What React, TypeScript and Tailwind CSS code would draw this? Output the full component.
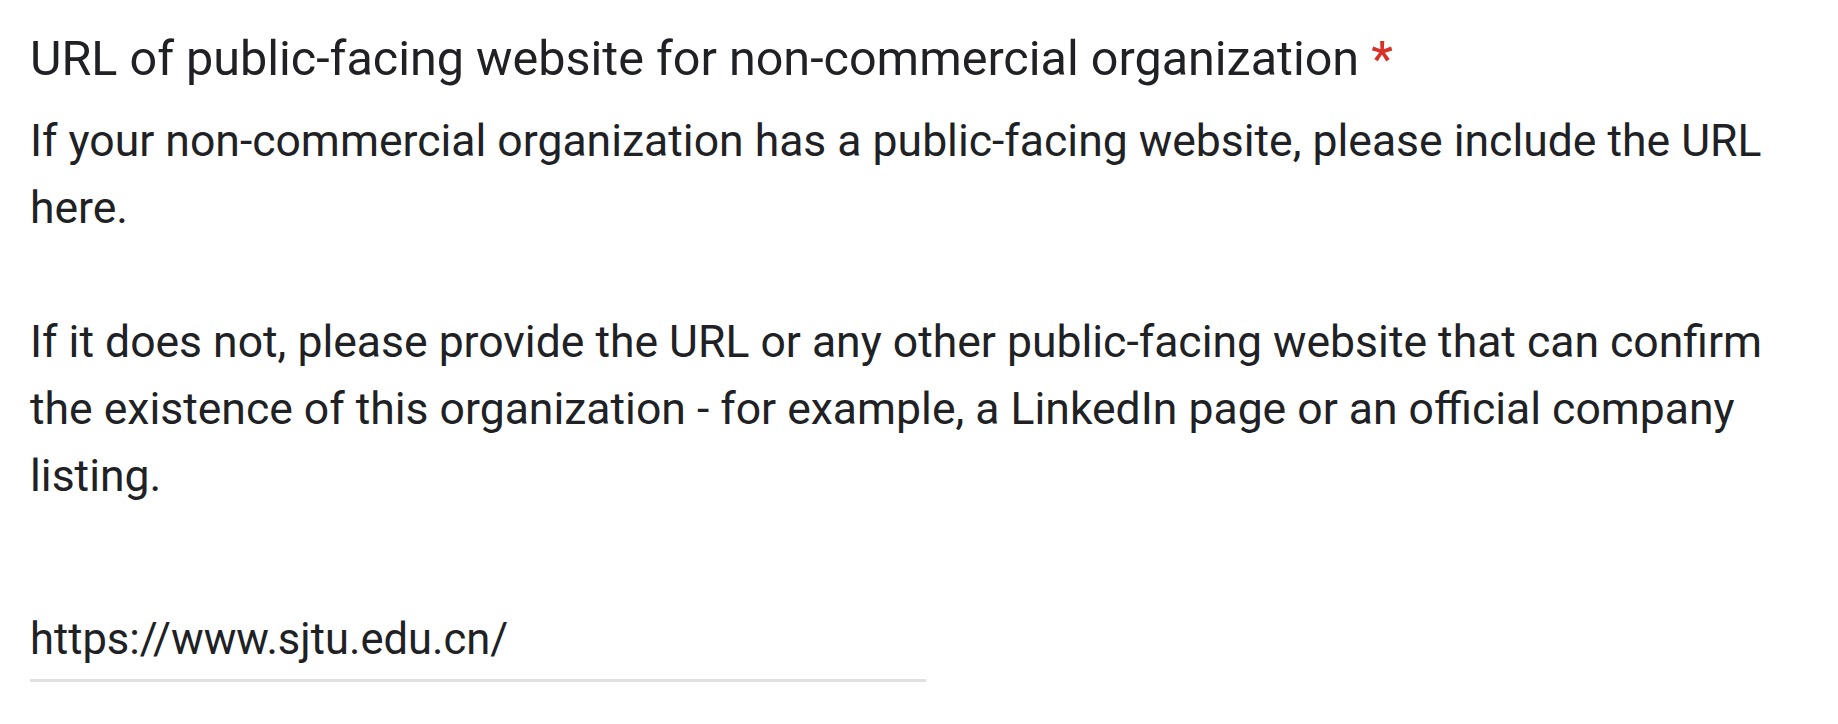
export default function App() {
  return (
    <div className="min-h-screen bg-white font-['Roboto',sans-serif] text-[#202124]">
      <div className="pl-[30px] pr-[30px] pt-[26px]">
        {/* Question title */}
        <div className="text-[48.5px] leading-[66px]">
          URL of public-facing website for non-commercial organization
          <span className="text-[#d93025] font-medium"> *</span>
        </div>

        {/* Help text */}
        <div className="text-[44.5px] leading-[67px] whitespace-pre-line mt-[16px]">
          {'If your non-commercial organization has a public-facing website, please include the URL here.\n\nIf it does not, please provide the URL or any other public-facing website that can confirm the existence of this organization - for example, a LinkedIn page or an official company listing.'}
        </div>

        {/* Answer */}
        <div className="mt-[100px] w-[896px]">
          <div className="text-[43.5px] leading-[60px] pb-[9px]">https://www.sjtu.edu.cn/</div>
          <div className="h-[3px] bg-[#e0e0e0]" />
        </div>
      </div>
    </div>
  );
}
